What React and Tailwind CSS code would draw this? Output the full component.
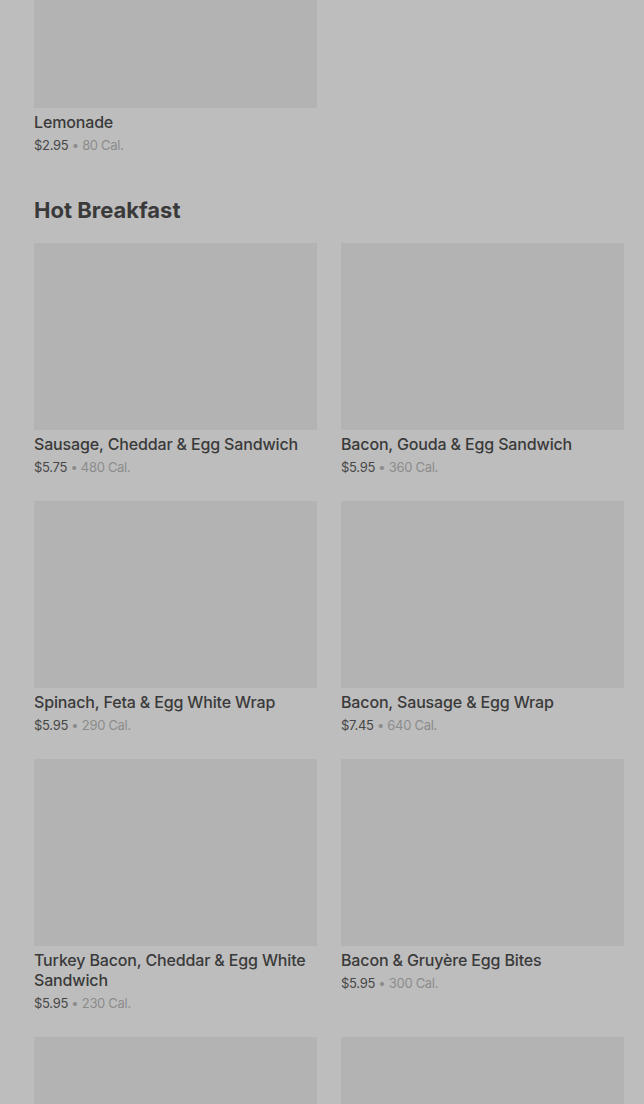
const items = [
  { name: 'Sausage, Cheddar & Egg Sandwich', price: '$5.75', cal: '480 Cal.' },
  { name: 'Bacon, Gouda & Egg Sandwich', price: '$5.95', cal: '360 Cal.' },
  { name: 'Spinach, Feta & Egg White Wrap', price: '$5.95', cal: '290 Cal.' },
  { name: 'Bacon, Sausage & Egg Wrap', price: '$7.45', cal: '640 Cal.' },
  { name: 'Turkey Bacon, Cheddar & Egg White Sandwich', price: '$5.95', cal: '230 Cal.' },
  { name: 'Bacon & Gruyère Egg Bites', price: '$5.95', cal: '300 Cal.' },
  { name: '', price: '', cal: '' },
  { name: '', price: '', cal: '' },
]

function ItemCard({ name, price, cal, imgClass = 'h-[187px]' }) {
  return (
    <div className="flex flex-col">
      <div className={`${imgClass} w-full bg-[#b3b3b3]`} />
      {name && (
        <>
          <div className="mt-1 text-[16px] leading-5 font-medium tracking-[-0.15px] text-[#3a3a3a]">{name}</div>
          <div className="mt-1 text-[13px] leading-[18px] tracking-[-0.3px] text-[#8c8c8c]">
            <span className="text-[#474747]">{price}</span>
            <span> • </span>
            <span>{cal}</span>
          </div>
        </>
      )}
    </div>
  )
}

export default function App() {
  return (
    <div
      className="min-h-[1104px] w-full overflow-hidden bg-[#bdbdbd] pl-[34px] pr-5"
      style={{ fontFamily: 'Inter, "Noto Sans", sans-serif' }}
    >
      <div className="grid grid-cols-2 gap-x-6">
        <ItemCard name="Lemonade" price="$2.95" cal="80 Cal." imgClass="h-[108px]" />
      </div>

      <h2 className="mt-[42px] text-[22px] leading-7 font-bold text-[#3a3a3a]">
        Hot Breakfast
      </h2>

      <div className="mt-[19px] grid grid-cols-2 gap-x-6 gap-y-[25px]">
        {items.map((it, i) => (
          <ItemCard key={i} {...it} />
        ))}
      </div>
    </div>
  )
}
